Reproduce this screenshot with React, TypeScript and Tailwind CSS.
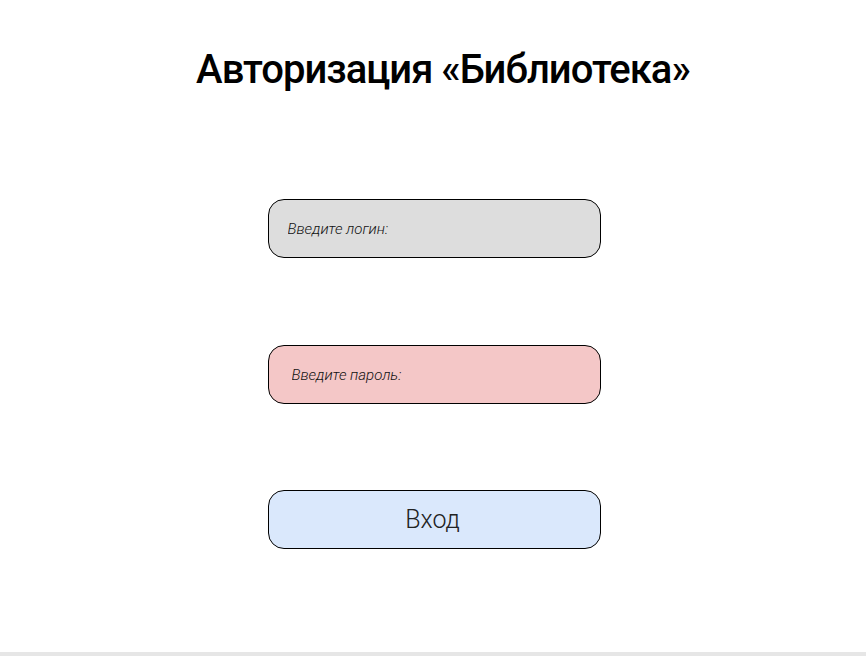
export default function App() {
  return (
    <div className="flex h-[656px] w-full flex-col bg-white font-['Roboto',sans-serif] text-black">
      <main className="flex flex-1 flex-col items-center">
        <h1 className="mt-[44px] pl-[20px] text-[40px] font-medium leading-[52px] tracking-[-1px]">
          Авторизация «Библиотека»
        </h1>

        <div className="mt-[103px] ml-[2px] flex w-[333px] flex-col gap-[87px]">
          <input
            type="text"
            placeholder="Введите логин:"
            className="h-[59px] w-full rounded-[16px] border border-black bg-[#dddddd] px-[19px] text-[15px] font-light italic outline-none placeholder:text-[#111]"
          />
          <input
            type="password"
            placeholder="Введите пароль:"
            className="h-[59px] w-full rounded-[16px] border border-black bg-[#f4c7c7] px-[23px] text-[15px] font-light italic outline-none placeholder:text-[#111]"
          />
          <button className="-mt-[1px] h-[59px] w-full rounded-[16px] border border-black bg-[#dae8fc] pr-[3px] text-[25px] font-light text-[#222]">
            Вход
          </button>
        </div>
      </main>
      <div className="h-[4px] w-full bg-[#e6e6e6]" />
    </div>
  );
}
